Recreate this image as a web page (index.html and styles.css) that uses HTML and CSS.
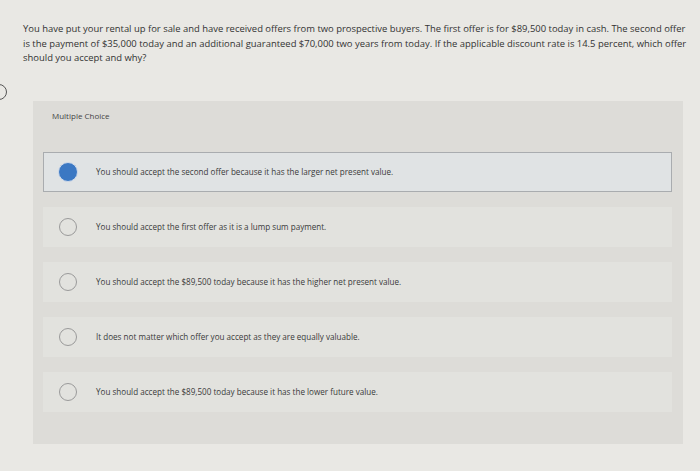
FILE: index.html
```html
<!DOCTYPE html>
<html>
<head>
<meta charset="utf-8">
<link rel="stylesheet" href="styles.css">
</head>
<body>
<div class="page">
  <p class="question">You have put your rental up for sale and have received offers from two prospective buyers. The first offer is for $89,500 today in cash. The second offer is the payment of $35,000 today and an additional guaranteed $70,000 two years from today. If the applicable discount rate is 14.5 percent, which offer should you accept and why?</p>
  <span class="edge-icon"></span>
  <section class="panel">
    <div class="label">Multiple Choice</div>
    <ul class="options">
      <li class="option selected"><span class="radio"></span><span class="text">You should accept the second offer because it has the larger net present value.</span></li>
      <li class="option"><span class="radio"></span><span class="text">You should accept the first offer as it is a lump sum payment.</span></li>
      <li class="option"><span class="radio"></span><span class="text">You should accept the $89,500 today because it has the higher net present value.</span></li>
      <li class="option"><span class="radio"></span><span class="text">It does not matter which offer you accept as they are equally valuable.</span></li>
      <li class="option"><span class="radio"></span><span class="text">You should accept the $89,500 today because it has the lower future value.</span></li>
    </ul>
  </section>
</div>
</body>
</html>
```
FILE: styles.css
```css
html, body {
  margin: 0;
  padding: 0;
}
body {
  background: #e9e8e4;
  font-family: "Open Sans", Lato, sans-serif;
  color: #3a3a3a;
  width: 700px;
  height: 471px;
  overflow: hidden;
}
.page {
  position: relative;
  display: flex;
  flex-direction: column;
  padding-top: 22px;
}
.question {
  margin: 0 0 0 23px;
  width: 666px;
  font-size: 9.45px;
  line-height: 14.5px;
  color: #333;
}
.edge-icon {
  position: absolute;
  left: -9px;
  top: 84px;
  width: 14px;
  height: 14px;
  border: 1.5px solid #555;
  border-radius: 50%;
}
.panel {
  margin: 35px 0 0 33px;
  width: 650px;
  height: 343px;
  box-sizing: border-box;
  background: #dddcd8;
  padding: 9px 11px 0 10px;
}
.label {
  font-size: 8px;
  line-height: 11px;
  color: #444;
  padding-left: 9px;
}
.options {
  list-style: none;
  margin: 31px 0 0 0;
  padding: 0;
  display: flex;
  flex-direction: column;
  gap: 15px;
}
.option {
  height: 40px;
  box-sizing: border-box;
  display: flex;
  align-items: center;
  padding-left: 15px;
  gap: 19px;
  background: #e2e2de;
  border: 1px solid transparent;
}
.option.selected {
  background: #e0e3e4;
  border-color: #a9acaf;
}
.radio {
  width: 18px;
  height: 18px;
  box-sizing: border-box;
  border-radius: 50%;
  border: 1px solid #9a9a9a;
  flex: none;
}
.selected .radio {
  width: 20px;
  height: 20px;
  margin-left: -1px;
  margin-right: -1px;
  background: #3b78c3;
  border: 1.5px solid #cfdaea;
}
.text {
  font-size: 8.1px;
  color: #3a3a3a;
}
```
